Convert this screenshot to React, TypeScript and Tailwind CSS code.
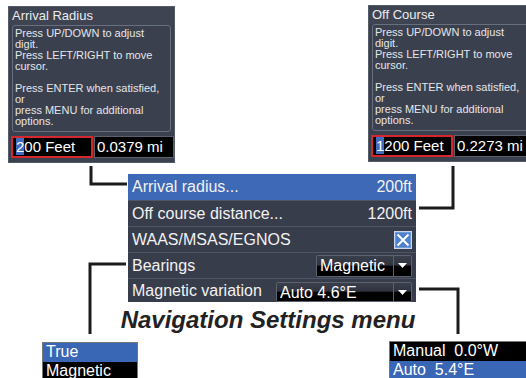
import type { ReactNode } from "react";

const HELP_LINES = [
  "Press UP/DOWN to adjust",
  "digit.",
  "Press LEFT/RIGHT to move",
  "cursor.",
  "",
  "Press ENTER when satisfied,",
  "or",
  "press MENU for additional",
  "options.",
];

function EntryDialog({ title, digit, rest, miles }: { title: string; digit: string; rest: string; miles: string }) {
  return (
    <div className="w-[167px] shrink-0 bg-[#3a404e] border border-[#555b67] pb-[4px]">
      <div className="h-[18px] px-[3px] text-[13px] leading-[18px] text-[#ececec] bg-[#3e4452]">{title}</div>
      <div className="mx-[3px] h-[107px] rounded-[3px] border border-[#687080] px-[2px] pt-[2px] text-[11px] leading-[11px] text-[#e4e6ea]">
        {HELP_LINES.map((line, i) => (
          <div key={i} className="h-[11px] whitespace-nowrap">
            {line}
          </div>
        ))}
      </div>
      <div className="mt-[4px] ml-[2px] flex h-[22px] text-[15px] leading-[18px] text-white">
        <div className="w-[82px] shrink-0 border-2 border-[#d3282c] bg-black pl-[3px] whitespace-nowrap">
          <span className="bg-[#3d6cc0]">{digit}</span>
          {rest}
        </div>
        <div className="ml-px flex-1 border border-[#5b606c] bg-black pl-[2px] leading-[19px] whitespace-nowrap">{miles}</div>
      </div>
    </div>
  );
}

function Dropdown({ value, width, height }: { value: string; width: string; height: string }) {
  return (
    <div className={`flex ${width} ${height} border border-[#5d6270] rounded-[2px]`}>
      <div className="flex-1 bg-[linear-gradient(#3a3f4c_0%,#30343f_45%,#000_52%,#000_100%)] pl-[3px] text-[16px] leading-[19px] text-white whitespace-nowrap">
        {value}
      </div>
      <div className="flex w-[18px] items-center justify-center border-l border-[#5d6270] bg-[linear-gradient(#3a3f4c_0%,#30343f_45%,#000_52%,#000_100%)]">
        <svg width="9" height="5" viewBox="0 0 9 5">
          <path d="M0 0 H9 L4.5 5 Z" fill="#ffffff" />
        </svg>
      </div>
    </div>
  );
}

function MenuRow({ children, active, h, last }: { children: ReactNode; active?: boolean; h: string; last?: boolean }) {
  return (
    <div
      className={`flex ${h} items-center justify-between pl-[4px] pr-[4px] ${
        active ? "bg-[#3e69b7]" : ""
      } ${last ? "" : "border-b border-[#4f5565]"}`}
    >
      {children}
    </div>
  );
}

export default function App() {
  return (
    <div className="relative w-[526px] h-[378px] overflow-hidden bg-white font-['Liberation_Sans',Arial,sans-serif]">
      {/* top dialogs */}
      <div className="flex items-start pl-[8px] pt-[6px] gap-[193px]">
        <EntryDialog title="Arrival Radius" digit="2" rest="00 Feet" miles="0.0379 mi" />
        <div className="-mt-px">
          <EntryDialog title="Off Course" digit="1" rest="200 Feet" miles="0.2273 mi" />
        </div>
      </div>

      {/* settings menu */}
      <div className="ml-[128px] mt-[11px] w-[288px] bg-[#383d4c] text-[16px] text-[#f2f2f2]">
        <MenuRow active h="h-[27px]">
          <span>Arrival radius...</span>
          <span>200ft</span>
        </MenuRow>
        <MenuRow h="h-[26px]">
          <span>Off course distance...</span>
          <span>1200ft</span>
        </MenuRow>
        <MenuRow h="h-[26px]">
          <span>WAAS/MSAS/EGNOS</span>
          <svg width="18" height="18" viewBox="0 0 18 18">
            <rect x="0.5" y="0.5" width="17" height="17" fill="#6f9ad8" stroke="#c9d8f0" />
            <rect x="2" y="2" width="14" height="14" fill="#4f80cc" />
            <path d="M3.5 3.5 L14.5 14.5 M14.5 3.5 L3.5 14.5" stroke="#ffffff" strokeWidth="2" />
          </svg>
        </MenuRow>
        <MenuRow h="h-[26px]">
          <span>Bearings</span>
          <Dropdown value="Magnetic" width="w-[96px]" height="h-[22px]" />
        </MenuRow>
        <MenuRow h="h-[23px]" last>
          <span>Magnetic variation</span>
          <div className="self-end">
            <Dropdown value="Auto 4.6°E" width="w-[136px]" height="h-[20px]" />
          </div>
        </MenuRow>
      </div>

      <p className="mt-[4px] text-center pl-[10px] text-[24px] leading-[28px] font-bold italic text-[#222222]">
        Navigation Settings menu
      </p>

      {/* option lists */}
      <div className="mt-[8px] flex items-start justify-between pl-[42px]">
        <div className="w-[96px] border border-[#777] text-[16px] leading-[18px] text-white">
          <div className="h-[19px] bg-[#3a66b6] pl-[3px]">True</div>
          <div className="h-[19px] bg-black pl-[3px]">Magnetic</div>
        </div>
        <div className="w-[137px] -mt-px border border-[#777] border-r-0 text-[16px] leading-[18px] text-white">
          <div className="h-[19px] bg-black pl-[3px] whitespace-nowrap">Manual&nbsp; 0.0°W</div>
          <div className="h-[20px] bg-[#3a66b6] pl-[3px] whitespace-nowrap">Auto&nbsp; 5.4°E</div>
        </div>
      </div>

      {/* callout lines */}
      <svg className="absolute left-0 top-0 pointer-events-none" width="526" height="378" viewBox="0 0 526 378">
        <g stroke="#1c1c1c" strokeWidth="3" fill="none">
          <path d="M91 166 V184 H127" />
          <path d="M453 166 V208 H419" />
          <path d="M126 264 H90 V334" />
          <path d="M419 289 H458 V334" />
        </g>
      </svg>
    </div>
  );
}
